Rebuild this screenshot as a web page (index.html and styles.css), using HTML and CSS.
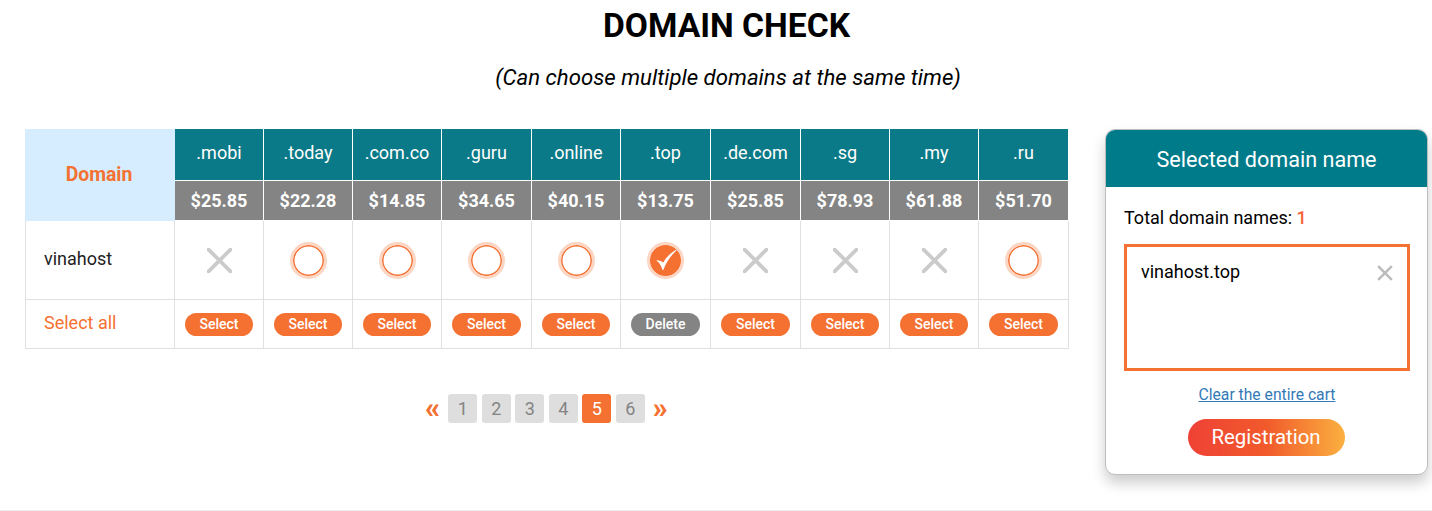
FILE: index.html
```html
<!DOCTYPE html>
<html lang="en">
<head>
<meta charset="utf-8">
<title>Domain check</title>
<link rel="stylesheet" href="styles.css">
</head>
<body>
<main class="page">
  <h1 class="title">DOMAIN CHECK</h1>
  <p class="subtitle">(Can choose multiple domains at the same time)</p>
  <div class="content">
    <section class="results">
      <table class="grid">
        <colgroup>
          <col class="c0"><col class="c1"><col class="c1"><col class="c1"><col class="c2"><col class="c1"><col class="c2"><col class="c2"><col class="c1"><col class="c1"><col class="c2">
        </colgroup>
        <thead>
          <tr class="tld-row">
            <th class="domain-head" rowspan="2">Domain</th>
            <th>.mobi</th><th>.today</th><th>.com.co</th><th>.guru</th><th>.online</th><th>.top</th><th>.de.com</th><th>.sg</th><th>.my</th><th>.ru</th>
          </tr>
          <tr class="price-row">
            <th>$25.85</th><th>$22.28</th><th>$14.85</th><th>$34.65</th><th>$40.15</th><th>$13.75</th><th>$25.85</th><th>$78.93</th><th>$61.88</th><th>$51.70</th>
          </tr>
        </thead>
        <tbody>
          <tr class="status-row">
            <td class="name">vinahost</td>
            <td><svg class="cross" viewBox="0 0 24 24"><path d="M1.5 1.5 22.5 22.5M22.5 1.5 1.5 22.5"/></svg></td>
            <td><span class="radio"></span></td>
            <td><span class="radio"></span></td>
            <td><span class="radio"></span></td>
            <td><span class="radio"></span></td>
            <td><span class="radio checked"><svg class="tick" viewBox="0 0 20 20"><path d="M3.2 10.5C5 11.6 6.4 13.6 7.6 17.4 9.8 11.6 13 6.6 17.6 2.6 12.8 5.6 9.8 8.8 7.9 12.6 6.8 11.4 5 10.6 3.2 10.5Z"/></svg></span></td>
            <td><svg class="cross" viewBox="0 0 24 24"><path d="M1.5 1.5 22.5 22.5M22.5 1.5 1.5 22.5"/></svg></td>
            <td><svg class="cross" viewBox="0 0 24 24"><path d="M1.5 1.5 22.5 22.5M22.5 1.5 1.5 22.5"/></svg></td>
            <td><svg class="cross" viewBox="0 0 24 24"><path d="M1.5 1.5 22.5 22.5M22.5 1.5 1.5 22.5"/></svg></td>
            <td><span class="radio"></span></td>
          </tr>
          <tr class="action-row">
            <td class="name select-all">Select all</td>
            <td><span class="pill">Select</span></td>
            <td><span class="pill">Select</span></td>
            <td><span class="pill">Select</span></td>
            <td><span class="pill">Select</span></td>
            <td><span class="pill">Select</span></td>
            <td><span class="pill pill-delete">Delete</span></td>
            <td><span class="pill">Select</span></td>
            <td><span class="pill">Select</span></td>
            <td><span class="pill">Select</span></td>
            <td><span class="pill">Select</span></td>
          </tr>
        </tbody>
      </table>
      <nav class="pager">
        <span class="arrow">«</span>
        <span class="pg">1</span><span class="pg">2</span><span class="pg">3</span><span class="pg">4</span><span class="pg current">5</span><span class="pg">6</span>
        <span class="arrow">»</span>
      </nav>
    </section>
    <aside class="cart">
      <h2 class="cart-head">Selected domain name</h2>
      <div class="cart-body">
        <p class="total">Total domain names: <b>1</b></p>
        <div class="cart-box">
          <span>vinahost.top</span>
          <svg class="cross-small" viewBox="0 0 14 14"><path d="M1 1 13 13M13 1 1 13"/></svg>
        </div>
        <a class="clear" href="#">Clear the entire cart</a>
        <a class="register" href="#">Registration</a>
      </div>
    </aside>
  </div>
</main>
<div class="rule"></div>
</body>
</html>
```
FILE: styles.css
```css
* { box-sizing: border-box; }
html, body { margin: 0; padding: 0; background: #fff; }
body { font-family: Roboto, "Liberation Sans", sans-serif; color: #000; height: 511px; overflow: hidden; display: flex; flex-direction: column; }
.page { padding: 0 4px 0 25px; height: 510px; }
.title { margin: 0; padding-top: 7px; font-size: 33.6px; line-height: 38px; font-weight: 700; text-align: center; color: #000; }
.subtitle { margin: 19px 0 0; padding-left: 3px; font-size: 22.2px; line-height: 26px; font-style: italic; font-weight: 400; text-align: center; }
.content { display: flex; justify-content: space-between; align-items: flex-start; margin-top: 39px; }
.results { width: 1044px; }
.grid { width: 1044px; border-collapse: collapse; table-layout: fixed; }
.c0 { width: 149px; }
.c1 { width: 89px; }
.c2 { width: 90px; }
.grid th, .grid td { padding: 0; text-align: center; vertical-align: middle; }
.grid th { border: 1px solid #fff; border-top: 0; }
.grid .domain-head { background: #d5edff; color: #f47132; padding-right: 2px; font-size: 19.4px; font-weight: 700; border-color: #d5edff; border-right-color: #d5edff; }
.tld-row th:not(.domain-head) { height: 51px; padding-bottom: 3px; background: #0b7a88; color: #fff; font-size: 18px; font-weight: 400; }
.price-row th { height: 40px; background: #848484; color: #fff; font-size: 18px; font-weight: 700; }
.grid td { border: 1px solid #e0e0e0; }
.status-row td { height: 79px; }
.action-row td { height: 49px; }
.name { text-align: left !important; padding-left: 18px !important; font-size: 18px; color: #222; }
.status-row .name { padding-bottom: 2px !important; }
.select-all { color: #f47132; font-size: 18px; font-weight: 400; padding-bottom: 3px !important; }
.cross { display: block; width: 25px; height: 25px; margin: 1px auto 0; }
.cross path { fill: none; stroke: #cbcbcb; stroke-width: 3.6; stroke-linecap: round; }
.radio { display: flex; align-items: center; justify-content: center; width: 37px; height: 37px; margin: 1px auto 0; border-radius: 50%; border: 3.5px solid #fdd5c3; background: #fff; box-shadow: inset 0 0 0 1.5px #f47132; }
.radio.checked { background: #f47132; background-clip: padding-box; }
.tick { width: 26px; height: 26px; flex: none; }
.tick path { fill: #fff; stroke: #fff; stroke-width: .8; stroke-linejoin: round; }
.pill { display: block; width: 68.5px; height: 23px; margin: 2px auto 0; border-radius: 12px; background: #f47132; color: #fff; font-size: 14px; font-weight: 500; line-height: 23px; }
.pill-delete { background: #848484; }
.pager { display: flex; justify-content: center; align-items: center; gap: 4.5px; margin: 45px 1px 0 0; }
.pg { width: 29px; height: 29px; border-radius: 3px; background: #dedede; color: #848484; font-size: 18px; line-height: 29px; text-align: center; }
.pg.current { background: #f47132; color: #fff; }
.arrow { color: #f47132; font-size: 29px; font-weight: 900; line-height: 29px; width: 22px; text-align: center; }
.cart { width: 323px; height: 346px; border: 1px solid #bdbdbd; border-radius: 10px; background: #fff; box-shadow: 0 8px 14px rgba(0,0,0,.2); overflow: hidden; margin-left: auto; }
.cart-head { margin: 0; height: 57px; background: #007b8a; color: #fff; font-size: 21.6px; font-weight: 400; line-height: 60px; text-align: center; }
.cart-body { padding: 0 17px 0 18px; display: flex; flex-direction: column; align-items: center; }
.total { align-self: stretch; margin: 20px 0 0; font-size: 18px; line-height: 22px; color: #000; }
.total b { color: #f4633a; font-weight: 500; }
.cart-box { align-self: stretch; display: flex; justify-content: space-between; height: 127px; margin-top: 15px; padding: 14px 14px 0 14px; border: 3px solid #f47132; font-size: 18px; line-height: 22px; color: #000; }
.cross-small { width: 16px; height: 16px; margin-top: 4px; }
.cross-small path { fill: none; stroke: #bcbcbc; stroke-width: 2.2; }
.clear { margin-top: 14px; font-size: 15.7px; line-height: 19px; color: #337ab7; text-decoration: underline; }
.register { margin: 15px 2px 0 0; width: 157px; height: 37px; border-radius: 19px; background: linear-gradient(90deg, #ef4136 0%, #f15a2b 50%, #fbb040 100%); color: #fff; font-size: 20.4px; line-height: 37px; text-align: center; text-decoration: none; }
.rule { height: 1px; background: #eee; }
```
